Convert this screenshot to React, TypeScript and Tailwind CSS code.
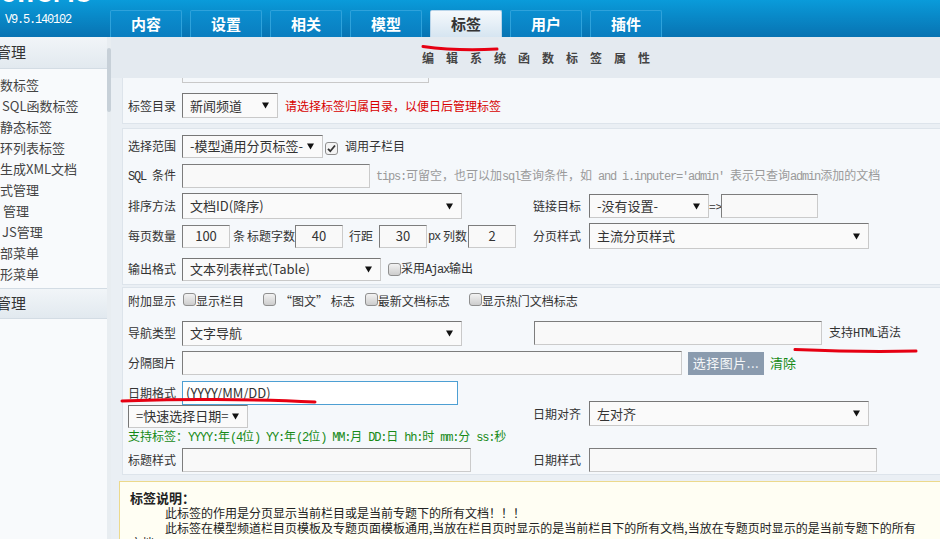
import React from "react";

const TABS = ["内容", "设置", "相关", "模型", "标签", "用户", "插件"];

const MENU = [
  { t: "数标签", pl: "pl-0" },
  { t: "SQL函数标签", pl: "pl-[2px]" },
  { t: "静态标签", pl: "pl-0" },
  { t: "环列表标签", pl: "pl-0" },
  { t: "生成XML文档", pl: "pl-0" },
  { t: "式管理", pl: "pl-0" },
  { t: "管理", pl: "pl-[3px]" },
  { t: "JS管理", pl: "pl-[2px]" },
  { t: "部菜单", pl: "pl-0" },
  { t: "形菜单", pl: "pl-0" },
];

// SimSun-like mixed text: ascii runs get a narrow mono face
function Sim({ text, className = "" }: { text: string; className?: string }) {
  const parts = text.match(/[\x00-\x7f]+|[^\x00-\x7f]+/g) || [];
  return (
    <span className={`whitespace-pre ${className}`}>
      {parts.map((p, i) =>
        /^[\x00-\x7f]/.test(p) ? (
          <span key={i} className="font-[family-name:'Liberation_Mono',monospace] text-[12px] tracking-[-1.2px]">
            {p}
          </span>
        ) : (
          <span key={i}>{p}</span>
        )
      )}
    </span>
  );
}

const Arrow = () => (
  <svg width="7" height="7" viewBox="0 0 7 7" className="shrink-0">
    <path d="M0 0.5h7L3.5 6.5z" fill="#111" />
  </svg>
);

function Select({ className, children }: { className: string; children: React.ReactNode }) {
  return (
    <div
      className={`flex items-center justify-between shrink-0 pl-[7px] pr-[8px] bg-[#fafafa] border border-t-[#777] border-l-[#777] border-r-[#c9c9c9] border-b-[#c9c9c9] text-[13px] text-[#333] ${className}`}
    >
      <span className="whitespace-nowrap">{children}</span>
      <Arrow />
    </div>
  );
}

function Input({ className, children }: { className: string; children?: React.ReactNode }) {
  return (
    <div
      className={`flex items-center shrink-0 bg-[#f9f9f9] border border-t-[#7d7d7d] border-l-[#7d7d7d] border-r-[#cbcbcb] border-b-[#cbcbcb] text-[13px] text-[#333] ${className}`}
    >
      {children}
    </div>
  );
}

const Check = ({ checked }: { checked?: boolean }) => (
  <span
    className={`inline-flex shrink-0 items-center justify-center w-[13px] h-[13px] rounded-[3px] border border-[#8f8f8f] ${
      checked ? "bg-[#f4f4f4]" : "bg-gradient-to-b from-[#f2f2f2] to-[#cdcdcd]"
    }`}
  >
    {checked && (
      <svg width="9" height="9" viewBox="0 0 9 9">
        <path d="M1 4.8l2.3 2.4L8 1.5" stroke="#333" strokeWidth="1.8" fill="none" />
      </svg>
    )}
  </span>
);

const Label = ({ children, w = "w-[54px]" }: { children: React.ReactNode; w?: string }) => (
  <span className={`${w} shrink-0 text-[12px] text-[#333] whitespace-nowrap`}>{children}</span>
);

export default function App() {
  return (
    <div className="relative w-[940px] h-[539px] overflow-hidden flex flex-col bg-[#eaeff4] text-[#333] font-[family-name:'Noto_Sans_CJK_SC',sans-serif]">
      {/* top bar */}
      <div className="h-[37px] shrink-0 flex bg-gradient-to-b from-[#0a9bda] to-[#0873b2]">
        <div className="w-[110px] shrink-0 flex flex-col">
          <div className="h-[4px] overflow-hidden">
            <div className="-mt-[23px] -ml-[8px] text-[27px] leading-[27px] font-bold text-white whitespace-nowrap">
              ionCMS
            </div>
          </div>
          <div className="mt-[4px] pl-[5px] leading-[16px] text-white">
            <Sim text="V9.5.140102" />
          </div>
        </div>
        <div className="flex items-end gap-[8px]">
          {TABS.map((t) =>
            t === "标签" ? (
              <div
                key={t}
                className="w-[72px] h-[27px] flex items-center justify-center rounded-t-[2px] border border-b-0 border-[#b9d5ea] bg-gradient-to-b from-[#f5f9fc] to-[#d6e5f1] text-[15px] font-bold text-[#333]"
              >
                {t}
              </div>
            ) : (
              <div
                key={t}
                className="w-[72px] h-[27px] flex items-center justify-center rounded-t-[2px] border border-b-0 border-[#2ea2db] bg-gradient-to-b from-[#0b8fd0] to-[#0a7ec0] text-[15px] font-bold text-white"
              >
                {t}
              </div>
            )
          )}
        </div>
      </div>

      <div className="flex flex-1 min-h-0">
        {/* left menu */}
        <aside className="w-[111px] shrink-0 flex bg-[#f8fafc]">
          <div className="w-[107px] flex flex-col">
            <div className="h-[32px] shrink-0 flex items-center border-b border-[#d3dce4] bg-gradient-to-b from-[#f1f5f8] to-[#e2e9ef] text-[15px] text-[#333] whitespace-nowrap">
              <span className="-ml-[4px]">管理</span>
            </div>
            <div className="pt-[5px] flex flex-col">
              {MENU.map((m) => (
                <div key={m.t} className={`h-[21px] flex items-center text-[13px] text-[#444] whitespace-nowrap ${m.pl}`}>
                  {m.t}
                </div>
              ))}
            </div>
            <div className="mt-[4px] h-[31px] flex items-center border-t border-b border-[#d3dce4] bg-gradient-to-b from-[#f1f5f8] to-[#e2e9ef] text-[15px] text-[#333] whitespace-nowrap">
              <span className="-ml-[4px]">管理</span>
            </div>
          </div>
          <div className="w-[4px] bg-[#e8edf1] pt-[11px]">
            <div className="h-[64px] rounded-[2px] bg-[#c7d0d8]" />
          </div>
        </aside>

        {/* main */}
        <main className="flex-1 min-w-0 flex flex-col">
          <div className="h-[41px] shrink-0 flex items-center pl-[311px] bg-[#e4eaf0] text-[12px] font-bold text-[#444] tracking-[12px] whitespace-nowrap">
            编辑系统函数标签属性
          </div>

          {/* panel 1 */}
          <div className="ml-[11px] pl-[5px] pb-[5px] bg-[#f5f8fb] border-l border-b border-[#dde4eb]">
            <div className="ml-[54px] w-[247px] h-[5px] border-l border-r border-b border-[#c9c9c9]" />
            <div className="mt-[10px] h-[25px] flex items-center">
              <Label>标签目录</Label>
              <Select className="w-[96px] h-[25px]">新闻频道</Select>
              <span className="ml-[7px] text-[12px] text-[#d80000] whitespace-nowrap">请选择标签归属目录，以便日后管理标签</span>
            </div>
          </div>

          {/* panel 2 */}
          <div className="mt-[4px] ml-[11px] pl-[5px] pt-[2px] bg-[#f5f8fb] border-l border-t border-b border-[#dde4eb]">
            <div className="h-[30px] flex items-center">
              <Label>选择范围</Label>
              <Select className="w-[141px] h-[23px]">-模型通用分页标签-</Select>
              <span className="ml-[2px]"><Check checked /></span>
              <span className="ml-[7px] text-[12px]">调用子栏目</span>
            </div>
            <div className="h-[30px] flex items-center">
              <Label><Sim text="SQL 条件" /></Label>
              <Input className="w-[188px] h-[24px]" />
              <Sim className="ml-[6px] text-[12px] text-[#9a9a9a]" text="tips:可留空，也可以加sql查询条件，如 and i.inputer='admin' 表示只查询admin添加的文档" />
            </div>
            <div className="flex">
              <div className="w-[405px] shrink-0">
                <div className="h-[30px] flex items-center">
                  <Label>排序方法</Label>
                  <Select className="w-[280px] h-[26px]">文档ID(降序)</Select>
                </div>
                <div className="h-[30px] flex items-center text-[12px] whitespace-nowrap">
                  <Label>每页数量</Label>
                  <Input className="w-[48px] h-[23px] justify-center">100</Input>
                  <span className="ml-[3px]">条</span>
                  <span className="ml-[2px]">标题字数</span>
                  <Input className="w-[48px] h-[23px] justify-center">40</Input>
                  <span className="ml-[6px]">行距</span>
                  <Input className="ml-[6px] w-[48px] h-[23px] justify-center">30</Input>
                  <Sim text="px" className="ml-[1px]" />
                  <span className="ml-[3px]">列数</span>
                  <Input className="ml-[1px] w-[48px] h-[23px] justify-center">2</Input>
                </div>
                <div className="mt-[3px] h-[30px] flex items-center">
                  <Label>输出格式</Label>
                  <Select className="w-[199px] h-[23px]">文本列表样式(Table)</Select>
                  <span className="ml-[7px]"><Check /></span>
                  <Sim className="text-[12px]" text="采用Ajax输出" />
                </div>
              </div>
              <div className="flex-1">
                <div className="h-[30px] flex items-center">
                  <Label w="w-[56px]">链接目标</Label>
                  <Select className="w-[120px] h-[24px]">-没有设置-</Select>
                  <span className="w-[12px] text-[12px] text-[#333]">=&gt;</span>
                  <Input className="w-[97px] h-[24px]" />
                </div>
                <div className="h-[30px] flex items-center">
                  <Label w="w-[56px]">分页样式</Label>
                  <Select className="w-[280px] h-[26px]">主流分页样式</Select>
                </div>
              </div>
            </div>
          </div>

          {/* panel 3 */}
          <div className="mt-[2px] ml-[11px] pl-[5px] pb-[2px] bg-[#f5f8fb] border-l border-t border-b border-[#dde4eb]">
            <div className="h-[26px] flex items-center text-[12px] whitespace-nowrap">
              <Label>附加显示</Label>
              <span className="ml-[1px]"><Check /></span>
              <span>显示栏目</span>
              <span className="ml-[19px]"><Check /></span>
              <span className="ml-[4px]">“图文” 标志</span>
              <span className="ml-[10px]"><Check /></span>
              <span>最新文档标志</span>
              <span className="ml-[19px]"><Check /></span>
              <span>显示热门文档标志</span>
            </div>
            <div className="mt-[4px] h-[30px] flex items-center">
              <div className="w-[405px] shrink-0 flex items-center">
                <Label>导航类型</Label>
                <Select className="w-[280px] h-[25px]">文字导航</Select>
              </div>
              <Input className="ml-[1px] w-[288px] h-[24px]" />
              <Sim className="ml-[7px] text-[12px]" text="支持HTML语法" />
            </div>
            <div className="h-[30px] flex items-center">
              <Label>分隔图片</Label>
              <Input className="w-[500px] h-[24px]" />
              <div className="ml-[6px] w-[76px] h-[23px] flex items-center justify-center bg-[#8a9bae] text-[13px] text-[#f4f6f8] tracking-[0.5px]">
                选择图片...
              </div>
              <span className="ml-[6px] text-[13px] text-[#178a17]">清除</span>
            </div>
            <div className="mt-[3px] flex">
              <div className="w-[405px] shrink-0">
                <div className="h-[24px] flex items-center">
                  <Label>日期格式</Label>
                  <div className="w-[276px] h-[24px] flex items-center pl-[3px] bg-white border border-[#4d9fd3] text-[13px] text-[#333]">
                    (YYYY/MM/DD)
                  </div>
                </div>
                <div className="h-[22px] flex items-center">
                  <Select className="w-[120px] h-[23px] pr-[7px]">=快速选择日期=</Select>
                </div>
                <div className="h-[19px] flex items-center">
                  <Sim className="text-[12px] text-[#178a17]" text="支持标签：YYYY:年(4位) YY:年(2位) MM:月 DD:日 hh:时 mm:分 ss:秒" />
                </div>
              </div>
              <div className="flex-1 flex items-center">
                <Label w="w-[56px]">日期对齐</Label>
                <Select className="w-[280px] h-[25px]">左对齐</Select>
              </div>
            </div>
            <div className="mt-[2px] h-[24px] flex items-center">
              <div className="w-[405px] shrink-0 flex items-center">
                <Label>标题样式</Label>
                <Input className="w-[289px] h-[24px]" />
              </div>
              <Label w="w-[56px]">日期样式</Label>
              <Input className="w-[288px] h-[24px]" />
            </div>
          </div>

          {/* notes */}
          <div className="mt-[6px] ml-[8px] flex-1 pl-[10px] pt-[8px] bg-[#fffef3] border-l border-t border-[#ecd98c] text-[12px] leading-[15px] text-[#222]">
            <div className="text-[13px] font-bold">标签说明：</div>
            <p className="indent-[35px]">此标签的作用是分页显示当前栏目或是当前专题下的所有文档！！！</p>
            <p className="indent-[35px] pr-[14px]">
              此标签在模型频道栏目页模板及专题页面模板通用,当放在栏目页时显示的是当前栏目下的所有文档,当放在专题页时显示的是当前专题下的所有文档。
            </p>
          </div>
        </main>
      </div>

      {/* red hand-drawn marks */}
      <svg className="absolute inset-0 pointer-events-none" width="940" height="539" viewBox="0 0 940 539">
        <path d="M423 46.5 C445 49.5 470 50.5 497 49" stroke="#e60012" strokeWidth="3" fill="none" strokeLinecap="round" />
        <path d="M122 401 C170 398.5 260 399 315 402" stroke="#e60012" strokeWidth="3" fill="none" strokeLinecap="round" />
        <path d="M795 349.5 C830 351 880 352 916 351" stroke="#e60012" strokeWidth="3" fill="none" strokeLinecap="round" />
      </svg>
    </div>
  );
}
